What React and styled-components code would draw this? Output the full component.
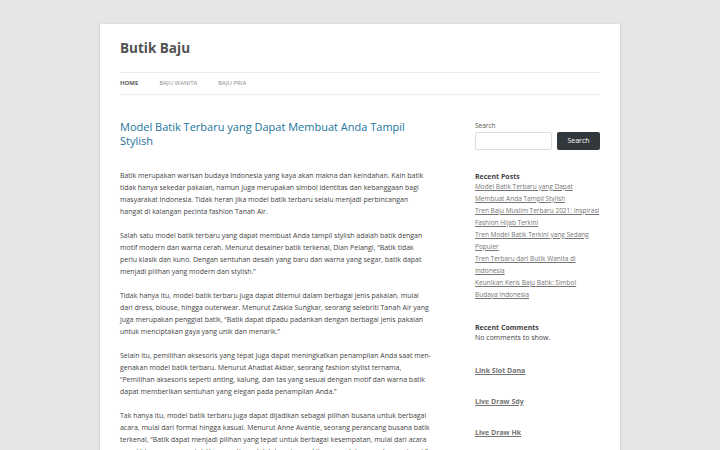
import React from "react";
import styled, { createGlobalStyle } from "styled-components";

const Global = createGlobalStyle`
  html, body { margin: 0; padding: 0; }
  body {
    background: #e6e6e6;
    font-family: "Open Sans", "Liberation Sans", sans-serif;
    color: #444;
    -webkit-font-smoothing: antialiased;
  }
  * { box-sizing: border-box; }
`;

const Page = styled.div`
  width: 520px;
  margin: 24px auto 0;
  padding: 0 20px 40px;
  background: #fff;
  box-shadow: 0 1px 3px rgba(100, 100, 100, 0.3);
`;

const Header = styled.header`
  padding-top: 15px;
`;

const SiteTitle = styled.h1`
  margin: 0;
  font-size: 13.5px;
  line-height: 18px;
  font-weight: 700;
  color: #515151;
`;

const Nav = styled.nav`
  margin-top: 15px;
  border-top: 1px solid #ededed;
  border-bottom: 1px solid #ededed;
  display: flex;
`;

const NavItem = styled.a`
  display: block;
  margin-right: 21px;
  font-size: 6px;
  line-height: 21px;
  text-transform: uppercase;
  text-decoration: none;
  color: ${(p) => (p.$current ? "#5e5e5e" : "#8a8a8a")};
  font-weight: ${(p) => (p.$current ? 700 : 400)};
`;

const Main = styled.div`
  display: flex;
  justify-content: space-between;
  align-items: flex-start;
  padding-top: 24.5px;
`;

const Content = styled.article`
  width: 312.5px;
`;

const EntryTitle = styled.h2`
  margin: 0 0 22px;
  font-size: 11px;
  line-height: 14px;
  font-weight: 400;
  color: #21759b;
`;

const Para = styled.p`
  margin: 0 0 12px;
  font-size: 6.97px;
  line-height: 12px;
  color: #444;
`;

const Sidebar = styled.aside`
  width: 125px;
`;

const Widget = styled.section`
  margin-bottom: 22px;
`;

const Label = styled.label`
  display: block;
  font-size: 6.5px;
  line-height: 12px;
  color: #555;
`;

const SearchRow = styled.div`
  display: flex;
  gap: 5px;
`;

const SearchInput = styled.input`
  width: 77px;
  height: 18px;
  border: 1px solid #ddd;
  border-radius: 2px;
  padding: 0 4px;
  font-size: 7px;
  font-family: inherit;
`;

const SearchButton = styled.button`
  width: 43px;
  height: 18px;
  border: none;
  border-radius: 2px;
  background: #32373c;
  color: #fff;
  font-family: inherit;
  font-size: 7px;
  padding: 0;
`;

const WidgetTitle = styled.h3`
  margin: 0;
  font-size: 7px;
  line-height: 9px;
  font-weight: 700;
  color: #444;
`;

const LinkTitle = styled.a`
  color: #757575;
  text-decoration: underline;
`;

const PostList = styled.ul`
  list-style: none;
  margin: 0;
  padding: 0;
`;

const PostLink = styled.a`
  color: #757575;
  text-decoration: underline;
`;

const PostItem = styled.li`
  font-size: 6.5px;
  line-height: 12px;
`;

const SmallText = styled.div`
  font-size: 7px;
  line-height: 12px;
  color: #444;
`;

const posts = [
  "Model Batik Terbaru yang Dapat Membuat Anda Tampil Stylish",
  "Tren Baju Muslim Terbaru 2021: Inspirasi Fashion Hijab Terkini",
  "Tren Model Batik Terkini yang Sedang Populer",
  "Tren Terbaru dari Butik Wanita di Indonesia",
  "Keunikan Keris Baju Batik: Simbol Budaya Indonesia",
];

const paragraphs = [
  "Batik merupakan warisan budaya Indonesia yang kaya akan makna dan keindahan. Kain batik tidak hanya sekedar pakaian, namun juga merupakan simbol identitas dan kebanggaan bagi masyarakat Indonesia. Tidak heran jika model batik terbaru selalu menjadi perbincangan hangat di kalangan pecinta fashion Tanah Air.",
  "Salah satu model batik terbaru yang dapat membuat Anda tampil stylish adalah batik dengan motif modern dan warna cerah. Menurut desainer batik terkenal, Dian Pelangi, \u201cBatik tidak perlu klasik dan kuno. Dengan sentuhan desain yang baru dan warna yang segar, batik dapat menjadi pilihan yang modern dan stylish.\u201d",
  "Tidak hanya itu, model batik terbaru juga dapat ditemui dalam berbagai jenis pakaian, mulai dari dress, blouse, hingga outerwear. Menurut Zaskia Sungkar, seorang selebriti Tanah Air yang juga merupakan penggiat batik, \u201cBatik dapat dipadu padankan dengan berbagai jenis pakaian untuk menciptakan gaya yang unik dan menarik.\u201d",
  "Selain itu, pemilihan aksesoris yang tepat juga dapat meningkatkan penampilan Anda saat men\u00ADgenakan model batik terbaru. Menurut Ahadiat Akbar, seorang fashion stylist ternama, \u201cPemilihan aksesoris seperti anting, kalung, dan tas yang sesuai dengan motif dan warna batik dapat memberikan sentuhan yang elegan pada penampilan Anda.\u201d",
  "Tak hanya itu, model batik terbaru juga dapat dijadikan sebagai pilihan busana untuk berbagai acara, mulai dari formal hingga kasual. Menurut Anne Avantie, seorang perancang busana batik terkenal, \u201cBatik dapat menjadi pilihan yang tepat untuk berbagai kesempatan, mulai dari acara resmi hingga acara santai. Yang penting adalah bagaimana kita memadukannya dengan tepat.\u201d",
];

export default function App() {
  return (
    <>
      <Global />
      <Page>
        <Header>
          <SiteTitle>Butik Baju</SiteTitle>
          <Nav>
            <NavItem href="#" $current>Home</NavItem>
            <NavItem href="#">Baju Wanita</NavItem>
            <NavItem href="#">Baju Pria</NavItem>
          </Nav>
        </Header>
        <Main>
          <Content>
            <EntryTitle>Model Batik Terbaru yang Dapat Membuat Anda Tampil Stylish</EntryTitle>
            {paragraphs.map((t, i) => (
              <Para key={i}>{t}</Para>
            ))}
          </Content>
          <Sidebar>
            <Widget>
              <Label>Search</Label>
              <SearchRow>
                <SearchInput type="text" />
                <SearchButton>Search</SearchButton>
              </SearchRow>
            </Widget>
            <Widget>
              <WidgetTitle>Recent Posts</WidgetTitle>
              <PostList>
                {posts.map((p) => (
                  <PostItem key={p}>
                    <PostLink href="#">{p}</PostLink>
                  </PostItem>
                ))}
              </PostList>
            </Widget>
            <Widget>
              <WidgetTitle>Recent Comments</WidgetTitle>
              <SmallText>No comments to show.</SmallText>
            </Widget>
            <Widget>
              <WidgetTitle><LinkTitle href="#">Link Slot Dana</LinkTitle></WidgetTitle>
            </Widget>
            <Widget>
              <WidgetTitle><LinkTitle href="#">Live Draw Sdy</LinkTitle></WidgetTitle>
            </Widget>
            <Widget>
              <WidgetTitle><LinkTitle href="#">Live Draw Hk</LinkTitle></WidgetTitle>
            </Widget>
          </Sidebar>
        </Main>
      </Page>
    </>
  );
}
